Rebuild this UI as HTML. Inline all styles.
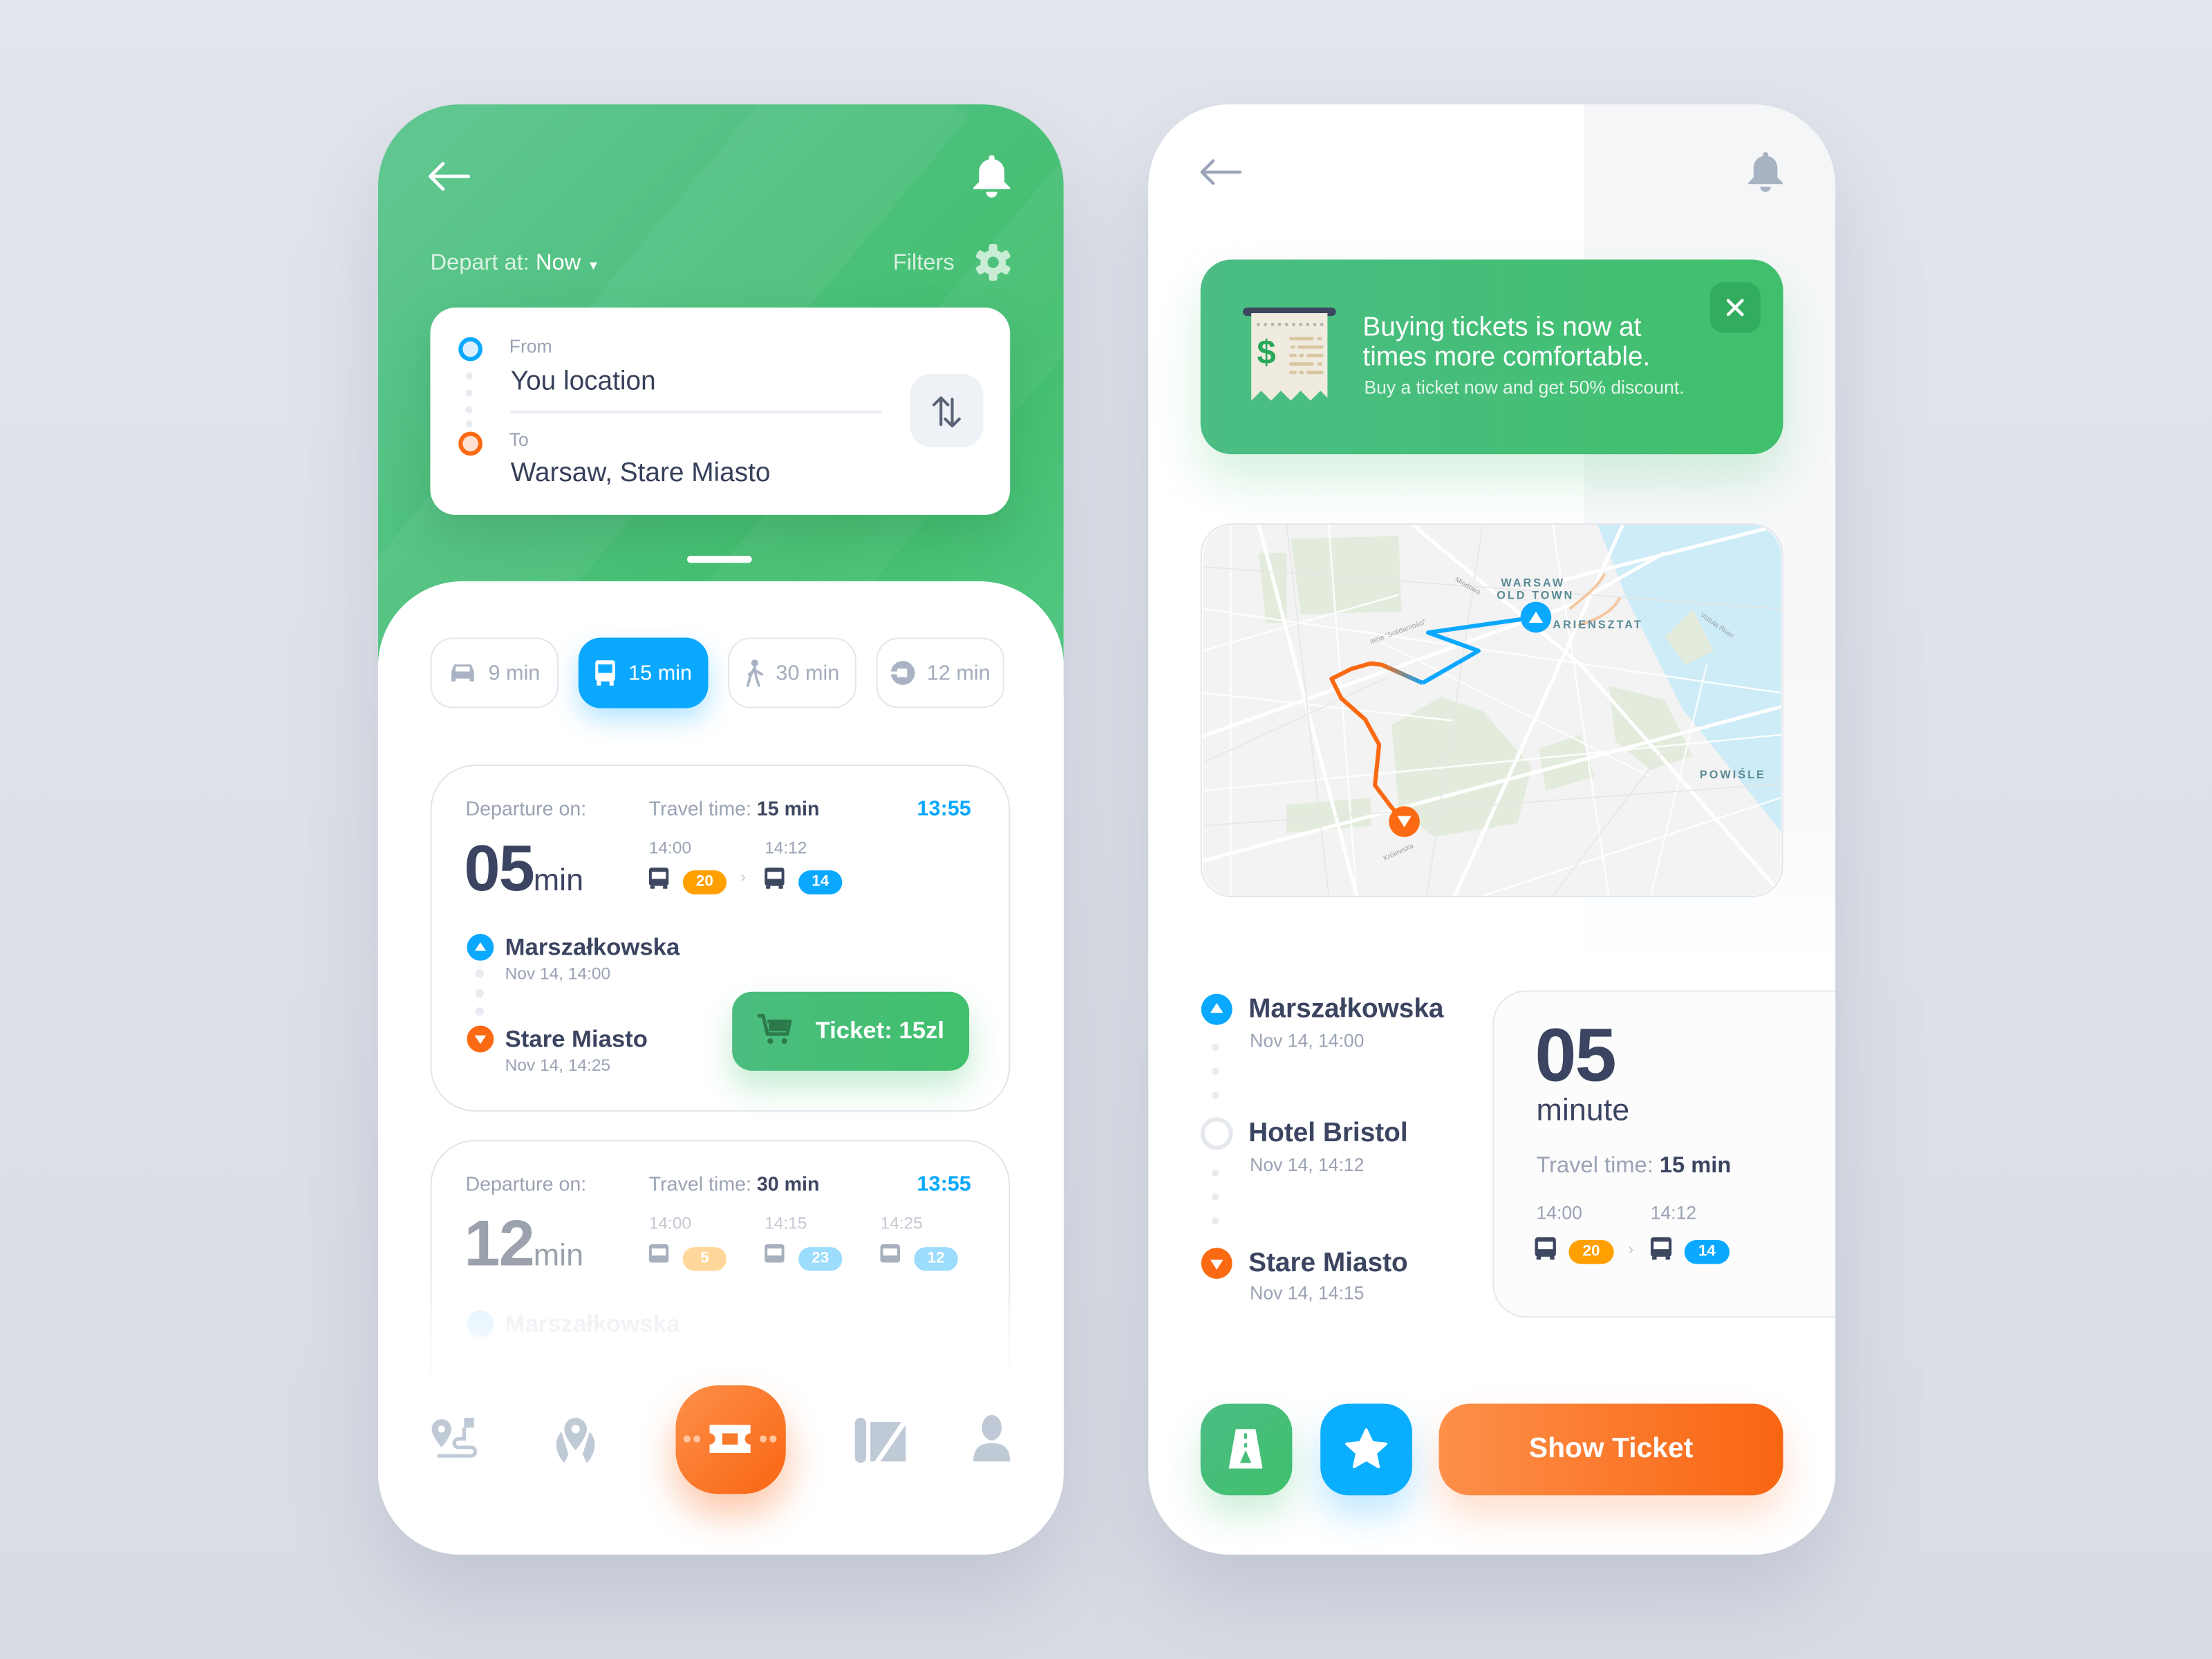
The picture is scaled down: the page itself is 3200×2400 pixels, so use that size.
<!DOCTYPE html>
<html><head><meta charset="utf-8">
<style>
*{margin:0;padding:0;box-sizing:border-box}
html,body{width:3200px;height:2400px;overflow:hidden;background:#dfe2e9}
#s{position:absolute;left:0;top:0;width:1568px;height:1176px;transform:scale(2.04082);transform-origin:0 0;font-family:"Liberation Sans",sans-serif;color:#3e4760;background:linear-gradient(180deg,#e2e5ec,#d9dce4)}
.a{position:absolute}
.t{position:absolute;white-space:nowrap;line-height:1}
.g{color:#9aa2b4}
.b{font-weight:bold}
.chip{position:absolute;top:452px;width:91px;height:50px;border:1.5px solid #e3e6ec;border-radius:16px;display:flex;align-items:center;justify-content:center;gap:8px;font-size:15px;color:#a3abbb}
.card{position:absolute;left:305px;width:411px;border:1.5px solid #e1e5ec;border-radius:32px;background:#fff}
.pill{display:inline-block;width:31px;height:17px;border-radius:9px;color:#fff;font-size:11px;text-align:center;line-height:17px;font-weight:bold}
.dot{position:absolute;width:6px;height:6px;border-radius:50%;background:#e8ebf0}
</style></head><body>
<div id="s">
<!-- LEFT PHONE -->
<div class="a" style="left:268px;top:74px;width:486px;height:1028px;border-radius:58px;overflow:hidden;background:#fff;box-shadow:0 30px 60px rgba(120,130,160,.25)">
  <div class="a" style="left:0;top:0;width:486px;height:420px;background:linear-gradient(135deg,#62c792 0%,#4cc07c 45%,#43bf6f 70%,#54c784 100%)"></div>
  <div class="a" style="left:120px;top:-100px;width:120px;height:600px;background:rgba(255,255,255,.05);transform:rotate(40deg)"></div>
  <div class="a" style="left:330px;top:-60px;width:90px;height:600px;background:rgba(255,255,255,.05);transform:rotate(40deg)"></div>
  <div class="a" style="left:0;top:338px;width:486px;height:690px;border-radius:60px 60px 0 0;background:#fff"></div>
</div>
<!-- header icons -->
<svg class="a" style="left:302px;top:113px" width="32" height="24" viewBox="0 0 32 24"><path d="M30 12H3M12 3L3 12l9 9" fill="none" stroke="#fff" stroke-width="2.4" stroke-linecap="round" stroke-linejoin="round"/></svg>
<svg class="a" style="left:688px;top:108px" width="30" height="34" viewBox="0 0 30 34"><path d="M15 2c1.2 0 2 .8 2 2v1c4.5 1 7 4.6 7 9v7l4 4v1H2v-1l4-4v-7c0-4.4 2.5-8 7-9V4c0-1.2.8-2 2-2z" fill="#fff"/><path d="M11 28h8a4 4 0 0 1-8 0z" fill="#fff"/></svg>
<div class="t" style="left:305px;top:179px;font-size:16px;color:rgba(255,255,255,.78)">Depart at: <span style="color:#fff">Now</span> <span style="font-size:9px;color:#fff">▼</span></div>
<div class="t" style="left:633px;top:179px;font-size:16px;color:rgba(255,255,255,.78)">Filters</div>
<svg class="a" style="left:691px;top:173px" width="26" height="26" viewBox="0 0 26 26"><g fill="#c9ecd5"><circle cx="13" cy="13" r="9"/><rect x="10" y="0" width="6" height="26" rx="1.5"/><rect x="10" y="0" width="6" height="26" rx="1.5" transform="rotate(60 13 13)"/><rect x="10" y="0" width="6" height="26" rx="1.5" transform="rotate(120 13 13)"/></g><circle cx="13" cy="13" r="4" fill="#4cc07c"/></svg>
<!-- input card -->
<div class="a" style="left:305px;top:218px;width:411px;height:147px;background:#fff;border-radius:18px;box-shadow:0 14px 30px rgba(40,120,70,.25)"></div>
<div class="a" style="left:325px;top:239px;width:17px;height:17px;border-radius:50%;border:3.5px solid #0aa8ff;background:#daf0fd"></div>
<div class="dot" style="left:330px;top:264px;width:5px;height:5px"></div><div class="dot" style="left:330px;top:276px;width:5px;height:5px"></div><div class="dot" style="left:330px;top:288px;width:5px;height:5px"></div><div class="dot" style="left:330px;top:298px;width:5px;height:5px"></div>
<div class="a" style="left:325px;top:306px;width:17px;height:17px;border-radius:50%;border:3.5px solid #fb6a12;background:#fde0cf"></div>
<div class="t g" style="left:361px;top:239px;font-size:13px">From</div>
<div class="t" style="left:362px;top:261px;font-size:19px;color:#36405a">You location</div>
<div class="a" style="left:362px;top:291px;width:263px;height:1.5px;background:#e8ebf0"></div>
<div class="t g" style="left:361px;top:305px;font-size:13px">To</div>
<div class="t" style="left:362px;top:326px;font-size:19px;color:#36405a">Warsaw, Stare Miasto</div>
<div class="a" style="left:645px;top:265px;width:52px;height:52px;border-radius:15px;background:#eef1f5"></div>
<svg class="a" style="left:659px;top:279px" width="24" height="26" viewBox="0 0 24 26"><path d="M8 22V3M3 8l5-5 5 5M16 4v19M11 18l5 5 5-5" fill="none" stroke="#5a6478" stroke-width="2" stroke-linecap="round" stroke-linejoin="round"/></svg>
<div class="a" style="left:487px;top:394px;width:46px;height:5px;border-radius:3px;background:#fff"></div>
<!-- chips -->
<div class="chip" style="left:305px"><svg width="20" height="16" viewBox="0 0 20 16"><path d="M4 2h12l2 5v7h-3v-2H5v2H2V7z" fill="#a9b3c3"/><rect x="5" y="3.5" width="10" height="3.5" fill="#fff"/></svg>9 min</div>
<div class="chip" style="left:410px;width:92px;background:#0aa8ff;border-color:#0aa8ff;color:#fff;box-shadow:0 8px 18px rgba(10,168,255,.3)"><svg width="16" height="18" viewBox="0 0 16 18"><rect x="1" y="0" width="14" height="15" rx="2" fill="#fff"/><rect x="3" y="3" width="10" height="6" fill="#0aa8ff"/><rect x="2" y="15" width="3" height="3" fill="#fff"/><rect x="11" y="15" width="3" height="3" fill="#fff"/></svg>15 min</div>
<div class="chip" style="left:516px"><svg width="14" height="20" viewBox="0 0 14 20"><circle cx="7" cy="3" r="2.5" fill="#a9b3c3"/><path d="M7 6L4 12l-2 7M7 6l1 7 2 6M7 8l-4 3M7 8l5 3" stroke="#a9b3c3" stroke-width="1.8" fill="none" stroke-linecap="round"/></svg>30 min</div>
<div class="chip" style="left:621px"><svg width="18" height="18" viewBox="0 0 18 18"><circle cx="9" cy="9" r="8.5" fill="#a9b3c3"/><rect x="5" y="6" width="7" height="6" fill="#fff"/><rect x="0" y="8" width="7" height="2" fill="#fff"/></svg>12 min</div>
<!-- card 1 -->
<div class="card" style="top:542px;height:246px"></div>
<div class="t g" style="left:330px;top:566px;font-size:14px">Departure on:</div>
<div class="t g" style="left:460px;top:566px;font-size:14px">Travel time: <span class="b" style="color:#3e4760">15 min</span></div>
<div class="t b" style="left:650px;top:566px;font-size:15px;color:#0aa8ff">13:55</div>
<div class="t b" style="left:329px;top:592px;font-size:46px;letter-spacing:-1px;color:#3b4460">05<span style="font-size:22px;font-weight:normal;letter-spacing:0">min</span></div>
<div class="t g" style="left:460px;top:595px;font-size:12px">14:00</div>
<div class="t g" style="left:542px;top:595px;font-size:12px">14:12</div>
<svg class="a" style="left:460px;top:615px" width="14" height="16" viewBox="0 0 14 16"><rect x="0" y="0" width="14" height="13" rx="2" fill="#3e4760"/><rect x="2" y="3" width="10" height="5" fill="#fff"/><rect x="1" y="13" width="3" height="2" fill="#3e4760"/><rect x="10" y="13" width="3" height="2" fill="#3e4760"/></svg>
<div class="a" style="left:484px;top:615px"><span class="pill" style="background:#ffa000">20</span></div>
<div class="t" style="left:525px;top:617px;font-size:11px;color:#c3c8d2">›</div>
<svg class="a" style="left:542px;top:615px" width="14" height="16" viewBox="0 0 14 16"><rect x="0" y="0" width="14" height="13" rx="2" fill="#3e4760"/><rect x="2" y="3" width="10" height="5" fill="#fff"/><rect x="1" y="13" width="3" height="2" fill="#3e4760"/><rect x="10" y="13" width="3" height="2" fill="#3e4760"/></svg>
<div class="a" style="left:566px;top:615px"><span class="pill" style="background:#0aa8ff">14</span></div>
<svg class="a" style="left:331px;top:662px" width="19" height="19"><circle cx="9.5" cy="9.5" r="9.5" fill="#0aa8ff"/><path d="M5.5 12h8l-4-6z" fill="#fff"/></svg>
<div class="t b" style="left:358px;top:663px;font-size:17px;color:#3b4460">Marszałkowska</div>
<div class="t g" style="left:358px;top:684px;font-size:12px">Nov 14, 14:00</div>
<div class="dot" style="left:337px;top:687px"></div><div class="dot" style="left:337px;top:701px"></div><div class="dot" style="left:337px;top:714px"></div>
<svg class="a" style="left:331px;top:727px" width="19" height="19"><circle cx="9.5" cy="9.5" r="9.5" fill="#fb6a12"/><path d="M5.5 7h8l-4 6z" fill="#fff"/></svg>
<div class="t b" style="left:358px;top:728px;font-size:17px;color:#3b4460">Stare Miasto</div>
<div class="t g" style="left:358px;top:749px;font-size:12px">Nov 14, 14:25</div>
<div class="a" style="left:519px;top:703px;width:168px;height:56px;border-radius:14px;background:linear-gradient(90deg,#4bbd7f,#40c06c);box-shadow:0 12px 22px rgba(64,192,108,.3)"></div>
<svg class="a" style="left:536px;top:718px" width="26" height="24" viewBox="0 0 26 24"><path d="M1 2h4l3 13h14l2-9H8" fill="none" stroke="#2c7a4a" stroke-width="2.5" stroke-linejoin="round"/><rect x="9" y="6" width="13" height="7" fill="#2c7a4a"/><circle cx="10" cy="20" r="2" fill="#2c7a4a"/><circle cx="20" cy="20" r="2" fill="#2c7a4a"/></svg>
<div class="t b" style="left:578px;top:722px;font-size:17px;color:#fff">Ticket: 15zl</div>
<!-- card 2 -->
<div class="card" style="top:808px;height:200px;border-bottom:none;border-radius:32px 32px 0 0"></div>
<div class="t g" style="left:330px;top:832px;font-size:14px">Departure on:</div>
<div class="t g" style="left:460px;top:832px;font-size:14px">Travel time: <span class="b" style="color:#3e4760">30 min</span></div>
<div class="t b" style="left:650px;top:832px;font-size:15px;color:#0aa8ff">13:55</div>
<div class="t b" style="left:329px;top:858px;font-size:46px;letter-spacing:-1px;color:#9ba1ad">12<span style="font-size:22px;font-weight:normal;letter-spacing:0">min</span></div>
<div class="t" style="left:460px;top:861px;font-size:12px;color:#c3c8d2">14:00</div>
<div class="t" style="left:542px;top:861px;font-size:12px;color:#c3c8d2">14:15</div>
<div class="t" style="left:624px;top:861px;font-size:12px;color:#c3c8d2">14:25</div>
<svg class="a" style="left:460px;top:882px" width="14" height="16" viewBox="0 0 14 16"><rect width="14" height="13" rx="2" fill="#a8afbd"/><rect x="2" y="3" width="10" height="5" fill="#fff"/></svg>
<div class="a" style="left:484px;top:882px"><span class="pill" style="background:#ffd79a">5</span></div>
<svg class="a" style="left:542px;top:882px" width="14" height="16" viewBox="0 0 14 16"><rect width="14" height="13" rx="2" fill="#a8afbd"/><rect x="2" y="3" width="10" height="5" fill="#fff"/></svg>
<div class="a" style="left:566px;top:882px"><span class="pill" style="background:#9cdcfc">23</span></div>
<svg class="a" style="left:624px;top:882px" width="14" height="16" viewBox="0 0 14 16"><rect width="14" height="13" rx="2" fill="#a8afbd"/><rect x="2" y="3" width="10" height="5" fill="#fff"/></svg>
<div class="a" style="left:648px;top:882px"><span class="pill" style="background:#9cdcfc">12</span></div>
<div class="t b" style="left:358px;top:930px;font-size:17px;color:#e3e6ec">Marszałkowska</div>
<svg class="a" style="left:331px;top:929px" width="19" height="19"><circle cx="9.5" cy="9.5" r="9.5" fill="#d7effd"/></svg>
<div class="a" style="left:290px;top:900px;width:440px;height:140px;background:linear-gradient(180deg,rgba(255,255,255,.1),#fff 60%)"></div>
<!-- bottom nav -->
<svg class="a" style="left:304px;top:1004px" width="34" height="34" viewBox="0 0 34 34"><path d="M9 2a7 7 0 0 1 7 7c0 5-7 13-7 13S2 14 2 9a7 7 0 0 1 7-7z" fill="#c0cad6"/><circle cx="9" cy="9" r="2.5" fill="#fff"/><rect x="25" y="1" width="7" height="7" fill="#c0cad6"/><path d="M25 8v8h-4a3 3 0 0 0 0 6h9a3 3 0 0 1 0 6H6" fill="none" stroke="#c0cad6" stroke-width="2.5"/></svg>
<svg class="a" style="left:390px;top:1003px" width="36" height="36" viewBox="0 0 36 36"><path d="M18 2a8 8 0 0 1 8 8c0 6-8 15-8 15s-8-9-8-15a8 8 0 0 1 8-8z" fill="#c0cad6"/><circle cx="18" cy="10" r="3" fill="#fff"/><path d="M8 12c-6 6-4 16 2 22l3-6M28 12c6 6 4 16-2 22l-3-6" fill="#c0cad6"/></svg>
<div class="a" style="left:460px;top:980px;width:118px;height:110px;border-radius:50%;background:radial-gradient(rgba(251,120,50,.18),rgba(251,120,50,0) 70%)"></div>
<div class="a" style="left:479px;top:982px;width:78px;height:77px;border-radius:30px;background:linear-gradient(135deg,#fd904a,#f96512);box-shadow:0 14px 26px rgba(250,110,30,.3)"></div>
<svg class="a" style="left:482px;top:1008px" width="72" height="26" viewBox="0 0 72 26"><g fill="#ffc6a0"><circle cx="5" cy="12" r="2.5"/><circle cx="12" cy="12" r="2.5"/><circle cx="59" cy="12" r="2.5"/><circle cx="66" cy="12" r="2.5"/></g><path d="M21 2h29v6a4 4 0 0 0 0 8v6H21v-6a4 4 0 0 0 0-8z" fill="#fff"/><rect x="30" y="8" width="11" height="8" fill="#f97a2a"/></svg>
<svg class="a" style="left:604px;top:1004px" width="40" height="34" viewBox="0 0 40 34"><rect x="2" y="1" width="8" height="32" rx="4" fill="#c0cad6"/><path d="M13 4h22L16 32h-3z" fill="#c0cad6"/><path d="M38 6v26H20z" fill="#c0cad6"/></svg>
<svg class="a" style="left:689px;top:1003px" width="28" height="34" viewBox="0 0 28 34"><ellipse cx="14" cy="9" rx="7" ry="9" fill="#c0cad6"/><path d="M1 33c0-9 4-13 13-13s13 4 13 13z" fill="#c0cad6"/></svg>

<!-- RIGHT PHONE -->
<div class="a" style="left:814px;top:74px;width:487px;height:1028px;border-radius:58px;overflow:hidden;background:#fff;box-shadow:0 30px 60px rgba(120,130,160,.25)">
  <div class="a" style="left:309px;top:0;width:178px;height:610px;background:linear-gradient(180deg,#f5f6f8,#f8f9fb 80%,#fff)"></div>
</div>
<svg class="a" style="left:849px;top:111px" width="32" height="22" viewBox="0 0 32 22"><path d="M30 11H3M11 3L3 11l8 8" fill="none" stroke="#9aa6b8" stroke-width="2.2" stroke-linecap="round" stroke-linejoin="round"/></svg>
<svg class="a" style="left:1237px;top:106px" width="29" height="32" viewBox="0 0 30 34"><path d="M15 2c1.2 0 2 .8 2 2v1c4.5 1 7 4.6 7 9v7l4 4v1H2v-1l4-4v-7c0-4.4 2.5-8 7-9V4c0-1.2.8-2 2-2z" fill="#a7b2c2"/><path d="M11 28h8a4 4 0 0 1-8 0z" fill="#a7b2c2"/></svg>
<!-- banner -->
<div class="a" style="left:851px;top:184px;width:413px;height:138px;border-radius:22px;background:linear-gradient(90deg,#4bbd85,#40c06c);box-shadow:0 18px 34px rgba(64,190,110,.22)"></div>
<svg class="a" style="left:880px;top:216px" width="68" height="74" viewBox="0 0 68 74"><rect x="1" y="2" width="66" height="6" rx="3" fill="#3e4760"/><path d="M7 6h54v60l-5-5-7 7-7-7-7 7-7-7-7 7-7-7-7 7z" fill="#f0ebdf"/><g fill="#b3b3b3"><circle cx="12" cy="14" r="1.2"/><circle cx="17" cy="14" r="1.2"/><circle cx="22" cy="14" r="1.2"/><circle cx="27" cy="14" r="1.2"/><circle cx="32" cy="14" r="1.2"/><circle cx="37" cy="14" r="1.2"/><circle cx="42" cy="14" r="1.2"/><circle cx="47" cy="14" r="1.2"/><circle cx="52" cy="14" r="1.2"/><circle cx="57" cy="14" r="1.2"/></g><text x="11" y="42" font-family="Liberation Sans" font-weight="bold" font-size="24" fill="#28a85a">$</text><g stroke="#d9c6a2" stroke-width="2.4" stroke-linecap="round"><path d="M35 24h15M55 24h1M36 30h1M41 30h16M35 36h3M42 36h1M47 36h10M35 42h15M55 42h1M35 48h3M42 48h1M47 48h10"/></g></svg>
<div class="t" style="left:966px;top:222px;font-size:19px;color:#fff;line-height:21px">Buying tickets is now at<br>times more comfortable.</div>
<div class="t" style="left:967px;top:268px;font-size:13px;color:rgba(255,255,255,.85)">Buy a ticket now and get 50% discount.</div>
<div class="a" style="left:1212px;top:200px;width:36px;height:36px;border-radius:10px;background:#32ad5f"></div>
<svg class="a" style="left:1224px;top:212px" width="12" height="12"><path d="M1 1l10 10M11 1L1 11" stroke="#fff" stroke-width="2.2" stroke-linecap="round"/></svg>
<!-- map -->
<svg class="a" style="left:851px;top:371px;border-radius:22px;border:1px solid #e2e6ec" width="413" height="265" viewBox="0 0 413 265">
<defs><clipPath id="c"><rect width="413" height="265" rx="22"/></clipPath><linearGradient id="rg" x1="0" x2="1"><stop offset="0" stop-color="#fb6a12"/><stop offset="1" stop-color="#0aa8ff"/></linearGradient></defs>
<g clip-path="url(#c)">
<rect width="413" height="265" fill="#f3f3f3"/>
<path d="M282 0L303 53 343 132 413 219V0z" fill="#cdecf8"/>
<g fill="#e3ecdc"><path d="M63 10L140 8 142 62 70 64z"/><path d="M135 143l35-20 30 10 35 40-10 40-60 10-25-20z"/><path d="M290 115l40 10 20 40-30 10-25-20z"/><path d="M40 20l20 0 0 50-15 0z"/><path d="M240 160l30-10 10 30-35 10z"/><path d="M60 200l60-5 0 20-60 5z"/><path d="M330 80l20-20 15 30-20 10z"/></g>
<g stroke="#ffffff" stroke-width="2.5" fill="none"><path d="M0 151L264 57 330 20"/><path d="M40 0l70 265"/><path d="M0 240L413 130"/><path d="M150 0l120 100 140 160"/><path d="M300 0l-120 265"/><path d="M255 40L413 0"/></g>
<g stroke="#ffffff" stroke-width="1.2" fill="none" opacity=".9"><path d="M20 0v265M90 0l20 265M0 60l413 60M0 190l413-40M250 0l40 265M360 100l-40 165M0 120l180 20M120 80l200 100M0 90l140-40M200 265l213-70"/></g>
<g stroke="#e6e6e6" stroke-width=".8" fill="none"><path d="M0 30l413 30M0 215l413-30M60 0l30 265M200 0l-40 265M330 160l-80 105M0 170l130-60"/></g>
<path d="M262 60c10-8 20-15 25-25M268 72c15-5 25-10 30-20" stroke="#f4c8a2" stroke-width="2" fill="none"/>
<path d="M238 66L161 77 197 90 157 113" stroke="#0aa8ff" stroke-width="3" fill="none" stroke-linejoin="round"/>
<path d="M157 113L128 100 120 99 106 103 92 110 99 124 116 139 126 157 123 186 135 202 144 212" stroke="#fb6a12" stroke-width="3" fill="none" stroke-linejoin="round"/>
<path d="M157 113L128 100" stroke="url(#rg)" stroke-width="3"/>
<circle cx="238" cy="66" r="11" fill="#0aa8ff"/><path d="M233 70h10l-5-8z" fill="#fff"/>
<circle cx="144" cy="212" r="11" fill="#fb6a12"/><path d="M139 208h10l-5 8z" fill="#fff"/>
<g font-family="Liberation Sans" font-weight="bold" fill="#5a8a96" font-size="8" letter-spacing="1.5"><text x="213" y="44">WARSAW</text><text x="210" y="53">OLD TOWN</text><text x="250" y="74">ARIENSZTAT</text><text x="355" y="181">POWIŚLE</text></g>
<g font-family="Liberation Sans" fill="#9aa0a6" font-size="5"><text x="120" y="85" transform="rotate(-20 120 85)">aleja "Solidarności"</text><text x="180" y="40" transform="rotate(30 180 40)">Miodowa</text><text x="355" y="65" transform="rotate(35 355 65)">Vistula River</text><text x="130" y="240" transform="rotate(-25 130 240)">Królewska</text></g>
</g></svg>
<!-- stops -->
<svg class="a" style="left:851px;top:704px" width="23" height="23"><circle cx="11.5" cy="11.5" r="11" fill="#0aa8ff"/><path d="M7 14h9l-4.5-7z" fill="#fff"/></svg>
<div class="t" style="left:885px;top:706px;font-size:19px;color:#3b4460;font-weight:bold">Marszałkowska</div>
<div class="t g" style="left:886px;top:731px;font-size:13px">Nov 14, 14:00</div>
<div class="dot" style="left:859px;top:740px;width:5px;height:5px"></div><div class="dot" style="left:859px;top:757px;width:5px;height:5px"></div><div class="dot" style="left:859px;top:774px;width:5px;height:5px"></div>
<div class="a" style="left:851px;top:792px;width:23px;height:23px;border-radius:50%;border:3.5px solid #e5e8ed"></div>
<div class="t" style="left:885px;top:794px;font-size:19px;color:#3b4460;font-weight:bold">Hotel Bristol</div>
<div class="t g" style="left:886px;top:819px;font-size:13px">Nov 14, 14:12</div>
<div class="dot" style="left:859px;top:829px;width:5px;height:5px"></div><div class="dot" style="left:859px;top:846px;width:5px;height:5px"></div><div class="dot" style="left:859px;top:863px;width:5px;height:5px"></div>
<svg class="a" style="left:851px;top:884px" width="23" height="23"><circle cx="11.5" cy="11.5" r="11" fill="#fb6a12"/><path d="M7 9h9l-4.5 7z" fill="#fff"/></svg>
<div class="t" style="left:885px;top:886px;font-size:19px;color:#3b4460;font-weight:bold">Stare Miasto</div>
<div class="t g" style="left:886px;top:910px;font-size:13px">Nov 14, 14:15</div>
<!-- info card -->
<div class="a" style="left:1058px;top:702px;width:243px;height:232px;border:1.5px solid #e4e8ee;border-right:none;border-radius:24px 0 0 24px;background:#fcfcfd"></div>
<div class="t b" style="left:1088px;top:722px;font-size:53px;color:#3b4460;letter-spacing:-1px">05</div>
<div class="t" style="left:1089px;top:776px;font-size:22px;color:#3b4460">minute</div>
<div class="t g" style="left:1089px;top:819px;font-size:16px">Travel time: <span class="b" style="color:#3b4460">15 min</span></div>
<div class="t g" style="left:1089px;top:853px;font-size:13px">14:00</div>
<div class="t g" style="left:1170px;top:853px;font-size:13px">14:12</div>
<svg class="a" style="left:1088px;top:877px" width="15" height="17" viewBox="0 0 14 16"><rect width="14" height="13" rx="2" fill="#3e4760"/><rect x="2" y="3" width="10" height="5" fill="#fff"/><rect x="1" y="13" width="3" height="2" fill="#3e4760"/><rect x="10" y="13" width="3" height="2" fill="#3e4760"/></svg>
<div class="a" style="left:1112px;top:877px"><span class="pill" style="background:#ffa000;width:32px">20</span></div>
<div class="t" style="left:1154px;top:879px;font-size:12px;color:#c3c8d2">›</div>
<svg class="a" style="left:1170px;top:877px" width="15" height="17" viewBox="0 0 14 16"><rect width="14" height="13" rx="2" fill="#3e4760"/><rect x="2" y="3" width="10" height="5" fill="#fff"/><rect x="1" y="13" width="3" height="2" fill="#3e4760"/><rect x="10" y="13" width="3" height="2" fill="#3e4760"/></svg>
<div class="a" style="left:1194px;top:877px"><span class="pill" style="background:#0aa8ff;width:32px">14</span></div>
<!-- buttons -->
<div class="a" style="left:851px;top:995px;width:65px;height:65px;border-radius:20px;background:linear-gradient(135deg,#4bbd85,#40c06c);box-shadow:0 14px 24px rgba(64,190,110,.25)"></div>
<svg class="a" style="left:870px;top:1012px" width="26" height="30" viewBox="0 0 26 30"><path d="M6 1h14l5 28H1z" fill="#fff"/><path d="M13 4v4M13 11v3" stroke="#45bf77" stroke-width="2" fill="none"/><path d="M13 16l-4 9h8z" fill="#45bf77"/></svg>
<div class="a" style="left:936px;top:995px;width:65px;height:65px;border-radius:20px;background:#0aaeff;box-shadow:0 14px 24px rgba(10,168,255,.25)"></div>
<svg class="a" style="left:953px;top:1012px" width="31" height="30" viewBox="0 0 24 23"><path d="M12 1l3.2 7 7.6.8-5.7 5.1 1.6 7.5L12 17.5 5.3 21.4l1.6-7.5L1.2 8.8 8.8 8z" fill="#fff" stroke="#fff" stroke-linejoin="round" stroke-width="1.5"/></svg>
<div class="a" style="left:1020px;top:995px;width:244px;height:65px;border-radius:22px;background:linear-gradient(90deg,#fd904a,#f96512);box-shadow:0 14px 26px rgba(250,110,30,.22);color:#fff;font-weight:bold;font-size:20px;text-align:center;line-height:65px">Show Ticket</div>
</div>
</body></html>
